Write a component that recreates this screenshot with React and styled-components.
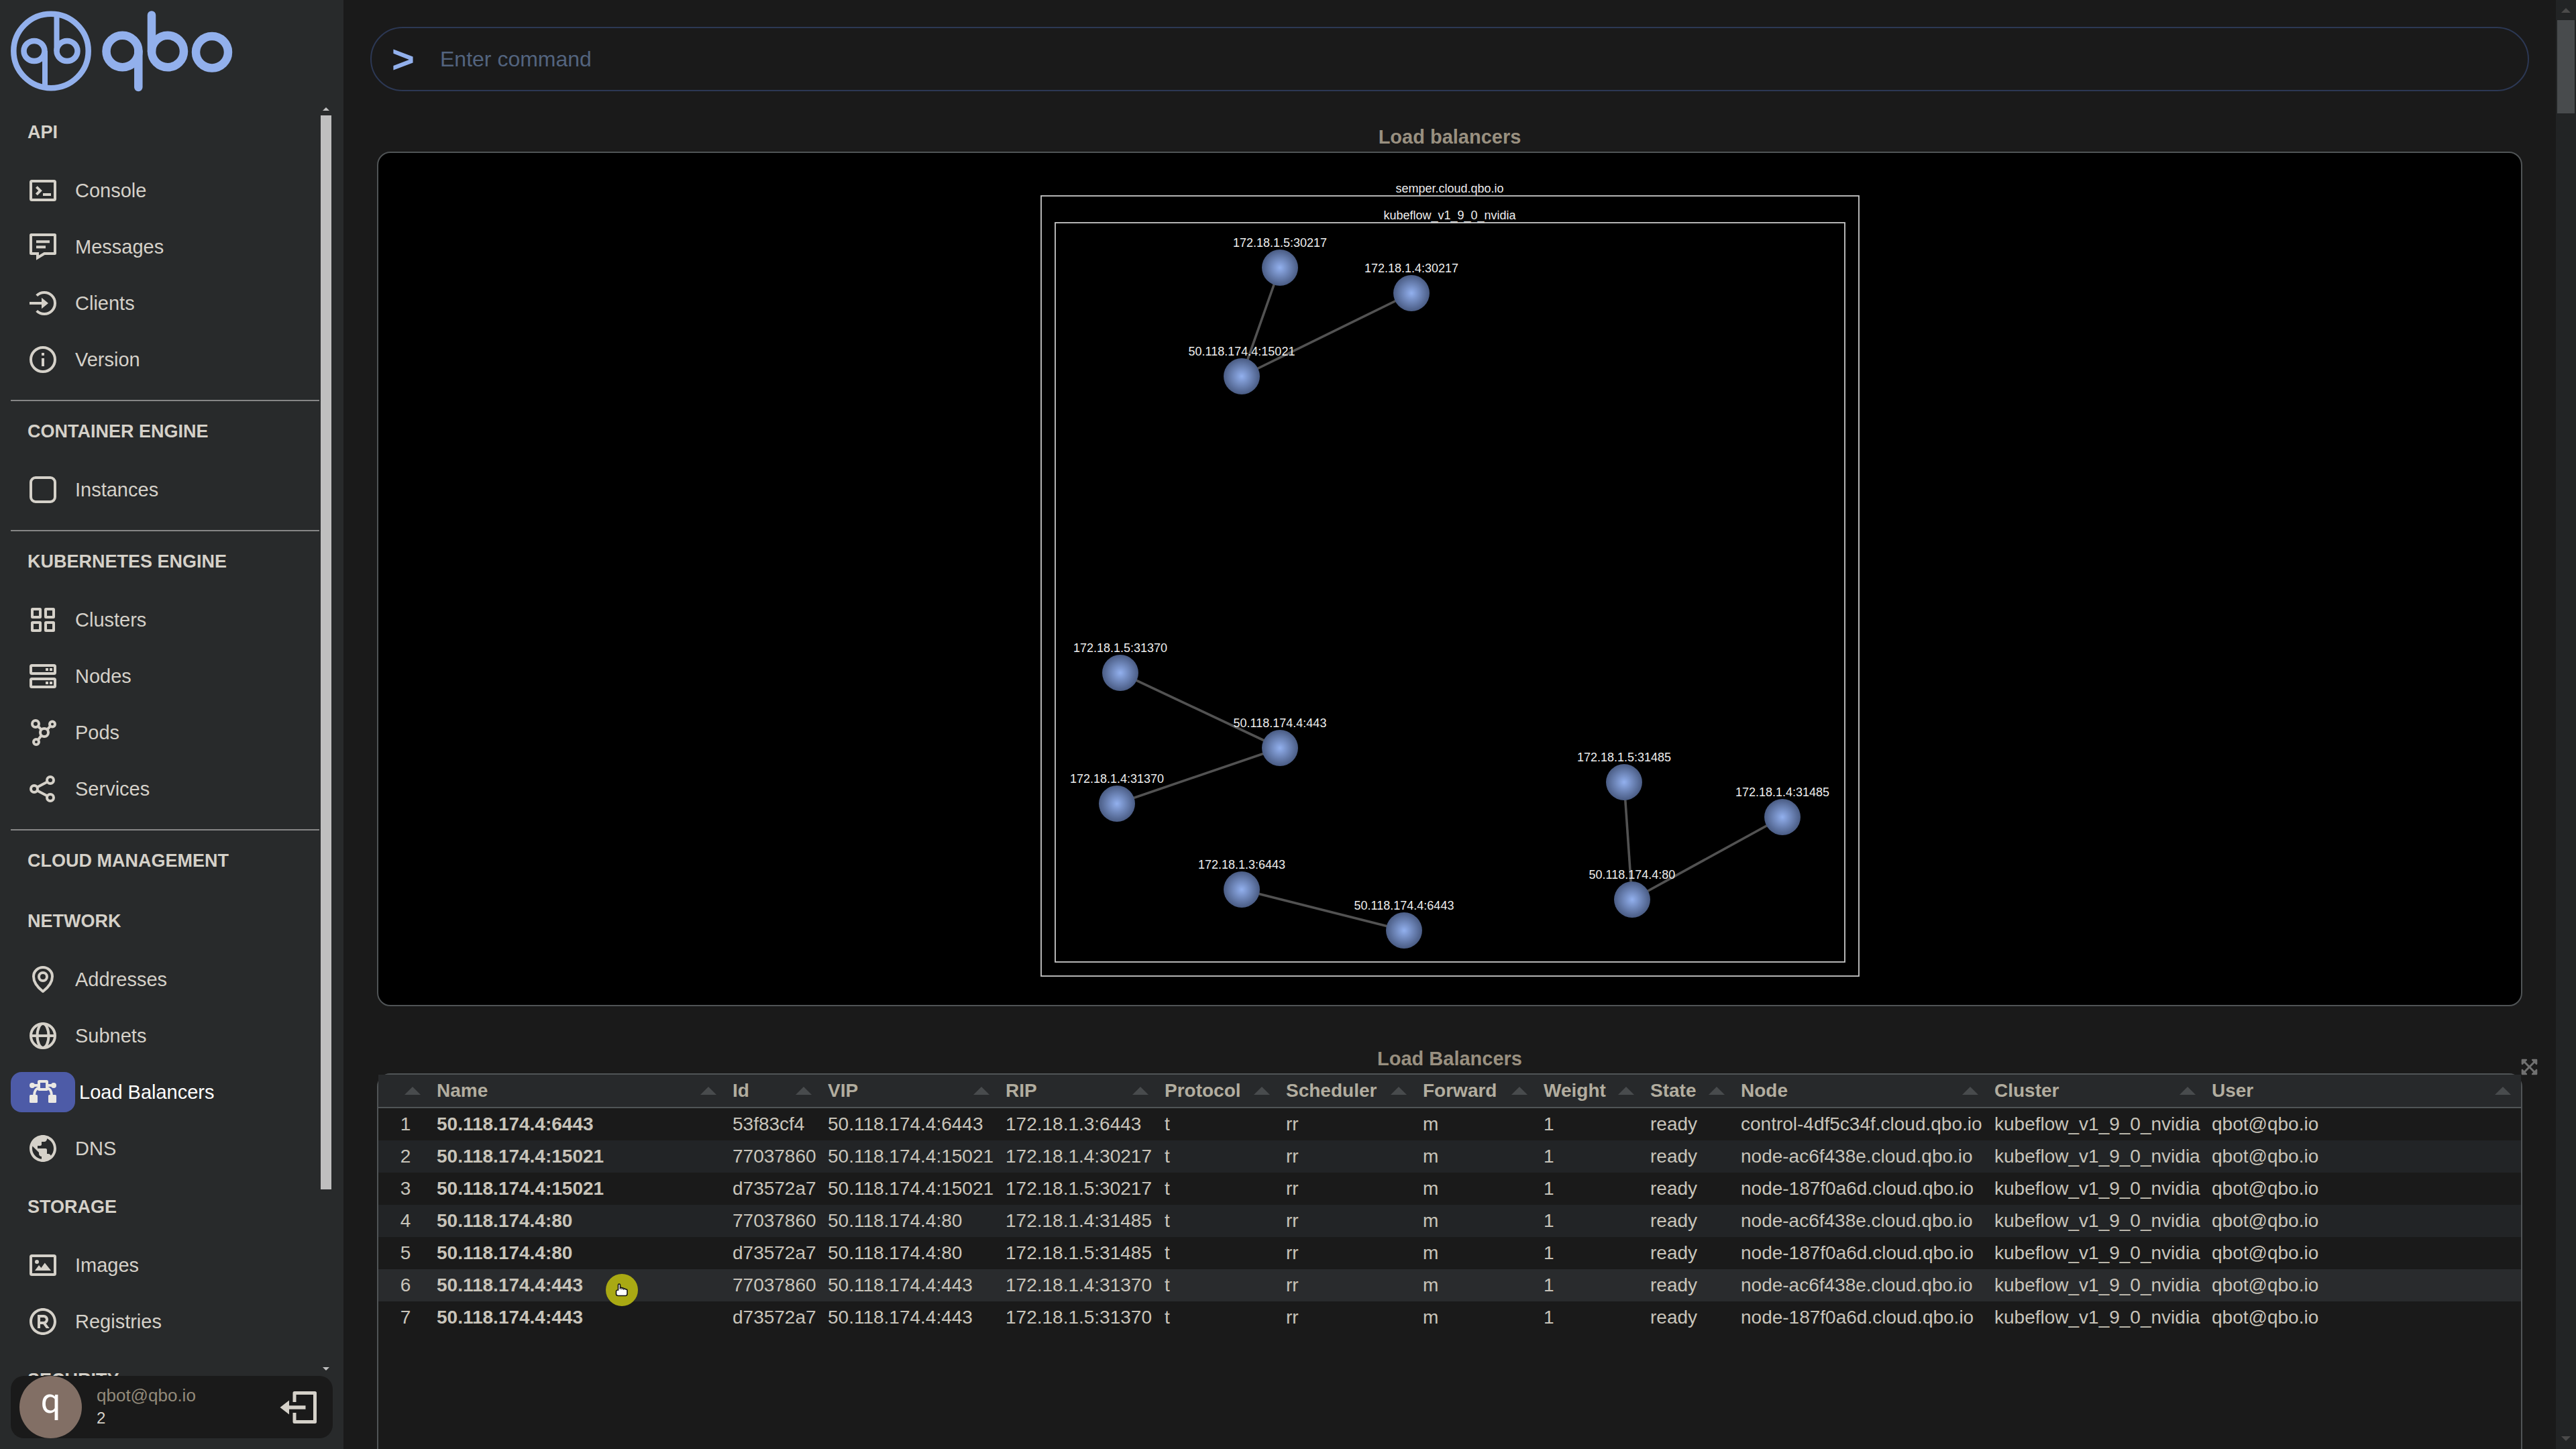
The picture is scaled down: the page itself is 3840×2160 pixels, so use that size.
import React, { useState } from 'react'
import styled, { createGlobalStyle, css } from "styled-components";
import { MdPublic } from "react-icons/md";
import { RiRegisteredLine } from "react-icons/ri";
import { FaExpandArrowsAlt } from "react-icons/fa";

const GlobalStyle = createGlobalStyle `
  * {
    box-sizing: border-box;
  }

  body {
    margin: 0;
    background: #1a1a1a;
    color: #d5d1c9;
    font-family: "Liberation Sans", Arial, sans-serif;
  }

  button {
    background: none;
    border: 0;
    padding: 0;
    color: inherit;
    font: inherit;
    cursor: pointer;
  }
`

/* ---------- icons (48 x 48 grid) ---------- */

const Glyph = ({ children }) => (
    <svg width="48" height="48" viewBox="0 0 48 48" fill="none" stroke="currentColor" strokeWidth="4" aria-hidden="true">
        {children}
    </svg>
);

const ConsoleIcon = () => (
    <Glyph>
        <rect x="6" y="10" width="36" height="28" rx="1.5" />
        <path d="M14.4 18.6L20 24.2l-5.6 5.6M24 30h12" />
    </Glyph>
);

const MessagesIcon = () => (
    <Glyph>
        <path
            fill="currentColor"
            stroke="none"
            fillRule="evenodd"
            d="M6.500 4h35A2.500 2.500 0 0 1 44 6.500v27a2.500 2.500 0 0 1-2.500 2.500H26.700L14 43.700V36H6.500A2.500 2.500 0 0 1 4 33.500v-27A2.500 2.500 0 0 1 6.500 4zM8 8v24h10v4.400l7.500-4.400H40V8z"
        />
        <path d="M14 16.200h20M14 24.200h14" />
    </Glyph>
);

const ClientsIcon = () => (
    <Glyph>
        <path d="M14.700 12.700a16 16 0 1 1 0 22.600M4 24h19" />
        <path fill="currentColor" stroke="none" d="M22 15.700L32 24l-10 8.300z" />
    </Glyph>
);

const VersionIcon = () => (
    <Glyph>
        <circle cx="24" cy="24" r="18" />
        <path d="M24 14v4M24 22v12" />
    </Glyph>
);

const InstancesIcon = () => (
    <Glyph>
        <rect x="6" y="6" width="36" height="36" rx="7" />
    </Glyph>
);

const ClustersIcon = () => (
    <Glyph>
        <rect x="8" y="8" width="12" height="12" rx="0.5" />
        <rect x="28" y="8" width="12" height="12" rx="0.5" />
        <rect x="8" y="28" width="12" height="12" rx="0.5" />
        <rect x="28" y="28" width="12" height="12" rx="0.5" />
    </Glyph>
);

const NodesIcon = () => (
    <Glyph>
        <rect x="6" y="8" width="36" height="12" rx="1.5" />
        <rect x="6" y="28" width="36" height="12" rx="1.5" />
        <path d="M28 14h4M34 14h4M28 34h4M34 34h4" />
    </Glyph>
);

const PodsIcon = () => (
    <Glyph>
        <circle cx="13" cy="11" r="5" />
        <circle cx="38" cy="11.500" r="4" />
        <circle cx="26" cy="24" r="6" />
        <circle cx="14" cy="38" r="4" />
        <path d="M16.500 14.500l5.200 5.200M35.200 14.300l-5 5.300M21.800 28.300l-5 6.500" />
    </Glyph>
);

const ServicesIcon = () => (
    <Glyph>
        <circle cx="11" cy="24" r="5" />
        <circle cx="35" cy="11" r="5" />
        <circle cx="35" cy="37" r="5" />
        <path d="M15.400 21.600l15.200-8.200M15.400 26.400l15.200 8.200" />
    </Glyph>
);

const AddressesIcon = () => (
    <Glyph>
        <path strokeLinejoin="round" d="M24 42C15 35 10 27.500 10 19.500a14 13.500 0 0 1 28 0C38 27.500 33 35 24 42z" />
        <circle cx="24" cy="20" r="6" />
    </Glyph>
);

const SubnetsIcon = () => (
    <Glyph>
        <circle cx="24" cy="24" r="18" />
        <ellipse cx="24" cy="24" rx="8.500" ry="18" />
        <path d="M6 24h36" />
    </Glyph>
);

const BalancersIcon = () => (
    <Glyph>
        <rect x="18" y="8" width="12" height="12" rx="0.5" />
        <path d="M8 14h10M30 14h10M11 29c0-6 3-10.500 7-11.500M37 29c0-6-3-10.500-7-11.500" />
        <g fill="currentColor" stroke="none">
            <circle cx="8" cy="14" r="4" />
            <circle cx="40" cy="14" r="4" />
            <rect x="4" y="28" width="12" height="12" rx="1.5" />
            <rect x="32" y="28" width="12" height="12" rx="1.5" />
        </g>
    </Glyph>
);

const ImagesIcon = () => (
    <Glyph>
        <rect x="6" y="10" width="36" height="28" rx="1.5" />
        <g fill="currentColor" stroke="none">
            <circle cx="15" cy="19" r="3" />
            <path d="M12 32l6-8 3.400 4 5.400-7.400L36 32z" />
        </g>
    </Glyph>
);

const DnsIcon = () => <MdPublic size={ 48 } />;
const RegistriesIcon = () => <RiRegisteredLine size={ 48 } />;

const Logo = () => (
    <svg width="336" height="128" viewBox="0 0 336 128" fill="none" stroke="#92b0ec" role="img" aria-label="qbo">
        <g strokeWidth="8.500">
            <ellipse cx="60" cy="64" rx="55.700" ry="55.200" />
            <ellipse cx="35" cy="64" rx="15.500" ry="15" />
            <ellipse cx="84" cy="64" rx="15.500" ry="15" />
            <path d="M51 64v53M68.500 10v54" strokeWidth="8" />
        </g>
        <g strokeWidth="12.500" strokeLinecap="round">
            <ellipse cx="166.500" cy="64.500" rx="24" ry="23.700" />
            <path d="M190.300 64.500v53.500M210 10.500v54" />
            <ellipse cx="234" cy="64.500" rx="24" ry="23.700" />
            <ellipse cx="300" cy="65.700" rx="24" ry="23.700" />
        </g>
    </svg>
);

/* ---------- sidebar ---------- */

const menu = [
    {
        title: "API",
        items: [
            { name: "Console", icon: ConsoleIcon },
            { name: "Messages", icon: MessagesIcon },
            { name: "Clients", icon: ClientsIcon },
            { name: "Version", icon: VersionIcon }
        ]
    },
    {
        title: "CONTAINER ENGINE",
        divided: true,
        items: [
            { name: "Instances", icon: InstancesIcon }
        ]
    },
    {
        title: "KUBERNETES ENGINE",
        divided: true,
        items: [
            { name: "Clusters", icon: ClustersIcon },
            { name: "Nodes", icon: NodesIcon },
            { name: "Pods", icon: PodsIcon },
            { name: "Services", icon: ServicesIcon }
        ]
    },
    {
        title: "CLOUD MANAGEMENT",
        divided: true,
        items: []
    },
    {
        title: "NETWORK",
        items: [
            { name: "Addresses", icon: AddressesIcon },
            { name: "Subnets", icon: SubnetsIcon },
            { name: "Load Balancers", icon: BalancersIcon },
            { name: "DNS", icon: DnsIcon }
        ]
    },
    {
        title: "STORAGE",
        items: [
            { name: "Images", icon: ImagesIcon },
            { name: "Registries", icon: RegistriesIcon }
        ]
    },
    {
        title: "SECURITY",
        items: []
    }
];

const Page = styled.div `
  position: relative;
  display: flex;
  height: 100vh;
  overflow: hidden;
`

const Sidebar = styled.aside `
  display: flex;
  flex-direction: column;
  flex: 0 0 512px;
  padding: 12px 16px 16px;
  background: #282a2b;
`

const LogoLink = styled.a `
  display: block;
  height: 140px;
`

const NavScroller = styled.div `
  display: flex;
  flex: 1;
  min-height: 0;
  gap: 2px;
  padding-right: 2px;
`

const Nav = styled.nav `
  flex: 1;
  overflow: hidden;
`

const NavTitle = styled.h3 `
  margin: 0;
  padding-left: 25px;
  font-size: 27px;
  line-height: 90px;
  font-weight: bold;
`

const NavDivider = styled.hr `
  height: 2px;
  margin: 18px 0 0;
  border: 0;
  background: #868686;
`

const NavItem = styled.a `
  display: flex;
  align-items: center;
  gap: ${ props => props.$active ? "6px" : "0" };
  height: 84px;
  font-size: 29px;
  line-height: 32px;
  color: ${ props => props.$active ? "#fff" : "inherit" };
  text-decoration: none;
`

const NavIcon = styled.span `
  display: flex;
  align-items: center;
  justify-content: center;
  width: 96px;
  height: 60px;
  border-radius: 16px;

  ${ props => props.$active && css `
    background: #4d5ba7;
    color: #eae8e3;
  ` }
`

const UserCard = styled.div `
  display: flex;
  align-items: center;
  gap: 22px;
  padding: 0 24px 0 13px;
  border-radius: 20px;
  background: #1a1a1a;
`

const Avatar = styled.div `
  display: flex;
  align-items: center;
  justify-content: center;
  width: 93px;
  height: 93px;
  padding-bottom: 18px;
  border-radius: 50%;
  background: #826f65;
  color: #fff;
  font-family: Roboto, sans-serif;
  font-size: 52px;
  line-height: 60px;
`

const UserInfo = styled.div `
  flex: 1;
  padding-bottom: 2px;
  line-height: 34px;
`

const UserName = styled.div `
  color: #928a7a;
  font-size: 26px;
`

const UserCount = styled.div `
  font-size: 24px;
`

const LogoutButton = styled.button `
  display: flex;
`

/* ---------- scroll bars ---------- */

const Triangle = styled.span `
  width: 0;
  height: 0;
  border: solid transparent;
  border-width: 0 ${ props => props.$half }px;
  border-${ props => props.$down ? "top" : "bottom" }: ${ props => props.$rise }px solid ${ props => props.$color };
`

const NavTrack = styled.div `
  display: flex;
  flex-direction: column;
  align-items: center;
  justify-content: space-between;
  width: 16px;
  padding: 8px 0;
`

const NavThumb = styled.div `
  width: 100%;
  height: 85%;
  margin: 7px 0 auto;
  background: #bfbfbf;
`

const PageTrack = styled.div `
  display: flex;
  flex-direction: column;
  align-items: center;
  flex: 0 0 30px;
  padding: 12px 2px;
  background: #222425;
`

const PageThumb = styled.div `
  width: 100%;
  height: 139px;
  margin: 11px 0 auto;
  background: #484b4d;
`

/* ---------- main column ---------- */

const Main = styled.main `
  flex: 1;
  min-width: 0;
  padding: 40px 40px 0;
`

const CommandBar = styled.form `
  display: flex;
  align-items: center;
  height: 96px;
  padding: 0 30px;
  border: 2px solid #2c3854;
  border-radius: 48px;
`

const Prompt = styled.label `
  width: 72px;
  color: #92b0ec;
  font-size: 58px;
  font-weight: bold;
  line-height: 60px;
`

const CommandInput = styled.input `
  flex: 1;
  padding: 0;
  border: 0;
  outline: 0;
  background: transparent;
  color: #92b0ec;
  font-family: inherit;
  font-size: 32px;

  &::placeholder {
    color: #53647f;
    opacity: 1;
  }
`

const Section = styled.section `
  position: relative;
  margin: ${ props => props.$gap }px 10px 0;
`

const SectionTitle = styled.h2 `
  margin: 0;
  color: #999080;
  font-size: 29px;
  line-height: 44px;
  text-align: center;
`

const Panel = styled.div `
  border: 2px solid #505456;
  border-radius: 20px;
`

const GraphPanel = styled(Panel) `
  overflow: hidden;
  background: #000;
`

const GraphSvg = styled.svg `
  display: block;
  width: 100%;
  height: 1270px;

  text {
    fill: #eee;
    font-family: "Liberation Sans", Arial, sans-serif;
    font-size: 18px;
    text-anchor: middle;
  }
`

const TablePanel = styled(Panel) `
  min-height: 1200px;
`

const ExpandButton = styled.button `
  position: absolute;
  top: 21px;
  right: -24px;
  display: flex;
  color: #707070;
`

const graphNodes = {
    a: { label: "172.18.1.5:30217", x: 382, y: 171 },
    b: { label: "172.18.1.4:30217", x: 578, y: 209 },
    c: { label: "50.118.174.4:15021", x: 325, y: 333 },
    d: { label: "172.18.1.5:31370", x: 144, y: 775 },
    e: { label: "50.118.174.4:443", x: 382, y: 887 },
    f: { label: "172.18.1.4:31370", x: 139, y: 970 },
    g: { label: "172.18.1.3:6443", x: 325, y: 1098 },
    h: { label: "50.118.174.4:6443", x: 567, y: 1159 },
    i: { label: "172.18.1.5:31485", x: 895, y: 938 },
    j: { label: "172.18.1.4:31485", x: 1131, y: 990 },
    k: { label: "50.118.174.4:80", x: 907, y: 1113 }
};

const graphLinks = [
    ["a", "c"], ["b", "c"], ["d", "e"], ["f", "e"],
    ["g", "h"], ["i", "k"], ["j", "k"]
];

const Graph = () => (
    <GraphSvg viewBox="0 0 1270 1270">
        <defs>
            <radialGradient id="ball">
                <stop offset="0" stopColor="#92b0ee" />
                <stop offset="1" stopColor="#4a5c84" />
            </radialGradient>
        </defs>
        <g fill="none" stroke="#c8c8c8" strokeWidth="1.8">
            <rect x="26" y="64" width="1219" height="1163" />
            <rect x="47" y="104" width="1177" height="1102" />
        </g>
        <text x="635" y="59">semper.cloud.qbo.io</text>
        <text x="635" y="99">kubeflow_v1_9_0_nvidia</text>
        {graphLinks.map(([from, to]) => (
            <line
                key={ from + to }
                x1={ graphNodes[from].x }
                y1={ graphNodes[from].y }
                x2={ graphNodes[to].x }
                y2={ graphNodes[to].y }
                stroke="#525252"
                strokeWidth="3.600"
            />
        ))}
        {Object.values(graphNodes).map(({ label, x, y }) => (
            <g key={ label }>
                <circle cx={ x } cy={ y } r="27" fill="url(#ball)" />
                <text x={ x } y={ y - 31 }>{label}</text>
            </g>
        ))}
    </GraphSvg>
);

/* ---------- table ---------- */

const columns = [
    { name: "", width: 78 },
    { name: "Name", width: 441 },
    { name: "Id", width: 142 },
    { name: "VIP", width: 265 },
    { name: "RIP", width: 237 },
    { name: "Protocol", width: 181 },
    { name: "Scheduler", width: 204 },
    { name: "Forward", width: 180 },
    { name: "Weight", width: 159 },
    { name: "State", width: 135 },
    { name: "Node", width: 378 },
    { name: "Cluster", width: 324 },
    { name: "User" }
];

const rows = [
    ["50.118.174.4:6443", "53f83cf4", "172.18.1.3:6443", "control-4df5c34f"],
    ["50.118.174.4:15021", "77037860", "172.18.1.4:30217", "node-ac6f438e"],
    ["50.118.174.4:15021", "d73572a7", "172.18.1.5:30217", "node-187f0a6d"],
    ["50.118.174.4:80", "77037860", "172.18.1.4:31485", "node-ac6f438e"],
    ["50.118.174.4:80", "d73572a7", "172.18.1.5:31485", "node-187f0a6d"],
    ["50.118.174.4:443", "77037860", "172.18.1.4:31370", "node-ac6f438e"],
    ["50.118.174.4:443", "d73572a7", "172.18.1.5:31370", "node-187f0a6d"]
];

const Table = styled.table `
  width: 100%;
  table-layout: fixed;
  border-spacing: 0;
  color: #c8c4ba;
  font-size: 28px;
  line-height: 32px;
`

const HeadCell = styled.th `
  height: 50px;
  padding: 0 15px 0 9px;
  border-bottom: 2px solid #505456;
  background: #27292b;
  color: #b2ad9f;
`

const SortButton = styled.button `
  display: flex;
  align-items: center;
  justify-content: space-between;
  width: 100%;
  font-weight: bold;
`

const Row = styled.tr `
  background: ${ props => props.$hovered ? "#292b2d" : "transparent" };

  &:nth-child(even) {
    background: ${ props => props.$hovered ? "#292b2d" : "#222426" };
  }
`

const Cell = styled.td `
  height: 48px;
  padding: 0 6px 0 9px;
  font-weight: ${ props => props.$bold ? "bold" : "normal" };
  text-align: ${ props => props.$center ? "center" : "left" };
  white-space: nowrap;
`

const Pointer = styled.div `
  position: absolute;
  left: 903px;
  top: 1899px;
  display: flex;
  align-items: center;
  justify-content: center;
  width: 48px;
  height: 48px;
  border-radius: 50%;
  background: #a9a913;
  pointer-events: none;
`

const BalancerTable = () => (
    <Table>
        <colgroup>
            {columns.map(({ name, width }) => <col key={ name } width={ width } />)}
        </colgroup>
        <thead>
            <tr>
                {columns.map(({ name }) => (
                    <HeadCell key={ name }>
                        <SortButton type="button" aria-label={ name || "Row" }>
                            <span>{name}</span>
                            <Triangle $half={ 12 } $rise={ 12 } $color="#484b4d" />
                        </SortButton>
                    </HeadCell>
                ))}
            </tr>
        </thead>
        <tbody>
            {rows.map(([vip, id, rip, node], i) => (
                <Row key={ i } $hovered={ i === 5 }>
                    <Cell $center>{i + 1}</Cell>
                    <Cell $bold>{vip}</Cell>
                    <Cell>{id}</Cell>
                    <Cell>{vip}</Cell>
                    <Cell>{rip}</Cell>
                    <Cell>t</Cell>
                    <Cell>rr</Cell>
                    <Cell>m</Cell>
                    <Cell>1</Cell>
                    <Cell>ready</Cell>
                    <Cell>{node}.cloud.qbo.io</Cell>
                    <Cell>kubeflow_v1_9_0_nvidia</Cell>
                    <Cell>qbot@qbo.io</Cell>
                </Row>
            ))}
        </tbody>
    </Table>
);

const SideMenu = () => {
    const [current, setCurrent] = useState("Load Balancers");

    return (
        <Sidebar>
            <LogoLink href="#"><Logo /></LogoLink>
            <NavScroller>
                <Nav>
                    {menu.map(({ title, divided, items }) => (
                        <React.Fragment key={ title }>
                            {divided && <NavDivider />}
                            <NavTitle>{title}</NavTitle>
                            {items.map(({ name, icon: Icon }) => (
                                <NavItem
                                    key={ name }
                                    href="#"
                                    $active={ name === current }
                                    onClick={ () => setCurrent(name) }
                                >
                                    <NavIcon $active={ name === current }><Icon /></NavIcon>
                                    {name}
                                </NavItem>
                            ))}
                        </React.Fragment>
                    ))}
                </Nav>
                <NavTrack>
                    <Triangle $half={ 5 } $rise={ 5 } $color="#bfbfbf" />
                    <NavThumb />
                    <Triangle $down $half={ 5 } $rise={ 5 } $color="#bfbfbf" />
                </NavTrack>
            </NavScroller>
            <UserCard>
                <Avatar>q</Avatar>
                <UserInfo>
                    <UserName>qbot@qbo.io</UserName>
                    <UserCount>2</UserCount>
                </UserInfo>
                <LogoutButton type="button" aria-label="Log out">
                    <svg width="55" height="48" viewBox="0 0 55 48" fill="none" stroke="currentColor" strokeWidth="5">
                        <path strokeLinejoin="round" d="M22 16V2.500h30.500v43H22V32" />
                        <path d="M12 24h26.500" strokeWidth="5.500" />
                        <path fill="currentColor" stroke="none" d="M0.500 24L14 13.500v21z" />
                    </svg>
                </LogoutButton>
            </UserCard>
        </Sidebar>
    );
}

const App = () => {
    const [command, setCommand] = useState("");

    return (<>
        <GlobalStyle />
        <Page>
            <SideMenu />
            <Main>
                <CommandBar onSubmit={ (e) => e.preventDefault() }>
                    <Prompt htmlFor="command">&gt;</Prompt>
                    <CommandInput
                        id="command"
                        placeholder="Enter command"
                        value={ command }
                        onChange={ (e) => setCommand(e.target.value) }
                    />
                </CommandBar>
                <Section $gap={ 46 }>
                    <SectionTitle>Load balancers</SectionTitle>
                    <GraphPanel><Graph /></GraphPanel>
                </Section>
                <Section $gap={ 56 }>
                    <SectionTitle>Load Balancers</SectionTitle>
                    <TablePanel><BalancerTable /></TablePanel>
                    <ExpandButton type="button" aria-label="Expand"><FaExpandArrowsAlt size={ 27 } /></ExpandButton>
                </Section>
            </Main>
            <PageTrack>
                <Triangle $half={ 7 } $rise={ 7 } $color="#4b4b4b" />
                <PageThumb />
                <Triangle $down $half={ 7 } $rise={ 7 } $color="#4b4b4b" />
            </PageTrack>
            <Pointer>
                <svg width="20" height="20" viewBox="0 0 20 20" aria-hidden="true">
                    <path
                        d="M4.500 2.500a1.500 1.500 0 0 1 3 0V6.500c1-.6 2.200-.3 2.600.6 1-.5 2.200-.2 2.700.8 1.200-.4 2.200-.1 2.800 1 1.200-.1 2.400.4 2.400 1.600V15.500c0 2-1 3-2.500 3H4.500c-2 0-3-1-3-2.500V12c0-1.500 1.500-2.200 3-2z"
                        fill="#fff"
                        stroke="#111"
                        strokeWidth="1.6"
                    />
                    <path d="M7.500 6v3M10.200 7.500v2M12.900 8v2" stroke="#111" strokeWidth="1.200" />
                </svg>
            </Pointer>
        </Page>
    </>);
}

export default App;
